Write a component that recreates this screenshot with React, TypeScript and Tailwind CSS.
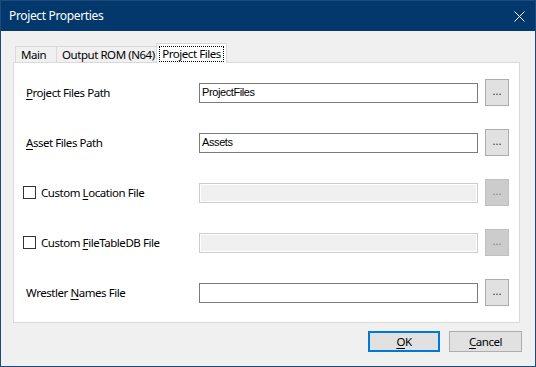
import React from "react";

const uiFont = "font-['Segoe_UI','Noto_Sans',sans-serif] text-[11.5px] tracking-[-0.45px]";

function Label({ text, accessIndex }: { text: string; accessIndex: number }) {
  return (
    <span className="whitespace-nowrap">
      {text.slice(0, accessIndex)}
      <span className="underline underline-offset-2">{text[accessIndex]}</span>
      {text.slice(accessIndex + 1)}
    </span>
  );
}

function PathRow({
  label,
  accessIndex,
  value,
  checkbox,
  disabled,
}: {
  label: string;
  accessIndex: number;
  value?: string;
  checkbox?: boolean;
  disabled?: boolean;
}) {
  return (
    <div className="flex items-center h-[27px]">
      <div className={`w-[185px] flex items-center ${checkbox ? "pl-[9px]" : "pl-[12px]"}`}>
        {checkbox && (
          <div className="w-[13px] h-[13px] border border-[#333333] bg-white mr-[5px] shrink-0" />
        )}
        <Label text={label} accessIndex={accessIndex} />
      </div>
      {disabled ? (
        <div className="w-[279px] h-[20px] border border-[#cccccc] bg-[#f0f0f0] shadow-[inset_0_0_0_1px_#ffffff]" />
      ) : (
        <div className="w-[279px] h-[20px] border border-[#7a7a7a] bg-white pl-[2px] flex items-center font-['Liberation_Sans',Arial,sans-serif] text-[11px] tracking-[-0.4px] text-black">
          {value}
        </div>
      )}
      <button
        className={`ml-[7px] w-[24px] h-[27px] border flex items-center justify-center text-[11px] tracking-normal pb-[2px] ${
          disabled ? "bg-[#cccccc] border-[#bfbfbf] text-[#838383]" : "bg-[#e1e1e1] border-[#adadad] text-[#333333]"
        }`}
      >
        ...
      </button>
    </div>
  );
}

export default function App() {
  return (
    <div className={`w-[536px] h-[367px] border border-[#1b4a7b] flex flex-col text-black ${uiFont}`}>
      {/* Title bar */}
      <div className="h-[30px] bg-[#02386b] flex items-center justify-between pl-[8px] pr-[10px] text-white">
        <span className="text-[12px] tracking-[-0.35px]">Project Properties</span>
        <svg width="11" height="11" viewBox="0 0 11 11" className="mt-[1px]">
          <path d="M0.5 0.5L10.5 10.5M10.5 0.5L0.5 10.5" stroke="#ffffff" strokeWidth="1" />
        </svg>
      </div>

      {/* Body */}
      <div className="flex-1 bg-[#f0f0f0] pt-[12px] px-[12px] flex flex-col">
        {/* Tabs */}
        <div className="flex items-end h-[19px] pl-[2px] relative z-10 whitespace-nowrap">
          <div className="w-[42px] h-[16px] border border-b-0 border-[#d9d9d9] bg-[#f0f0f0] flex items-center pl-[5px] pt-[1px]">
            Main
          </div>
          <div className="w-[100px] h-[16px] border border-b-0 border-l-0 border-[#d9d9d9] bg-[#f0f0f0] flex items-center pl-[5px] pt-[1px]">
            Output ROM (N64)
          </div>
          <div className="w-[71px] h-[20px] -ml-[1px] border border-b-0 border-[#d9d9d9] bg-white flex items-end justify-center pb-[1px] mb-[-1px]">
            <span className="border border-dotted border-black px-[2px] h-[16px] leading-[14px]">Project Files</span>
          </div>
        </div>

        {/* Panel */}
        <div className="h-[261px] w-[507px] border border-[#d9d9d9] bg-white pt-[16px] flex flex-col gap-[23px]">
          <PathRow label="Project Files Path" accessIndex={0} value="ProjectFiles" />
          <PathRow label="Asset Files Path" accessIndex={0} value="Assets" />
          <PathRow label="Custom Location File" accessIndex={7} checkbox disabled />
          <PathRow label="Custom FileTableDB File" accessIndex={7} checkbox disabled />
          <PathRow label="Wrestler Names File" accessIndex={9} value="" />
        </div>

        {/* Dialog buttons */}
        <div className="flex justify-end gap-[9px] mt-[8px] pr-[1px]">
          <button className="w-[72px] h-[21px] border-2 border-[#0078d7] bg-[#e1e1e1] flex items-center justify-center">
            <Label text="OK" accessIndex={0} />
          </button>
          <button className="w-[73px] h-[21px] border border-[#adadad] bg-[#e1e1e1] flex items-center justify-center">
            <Label text="Cancel" accessIndex={0} />
          </button>
        </div>
      </div>
    </div>
  );
}
